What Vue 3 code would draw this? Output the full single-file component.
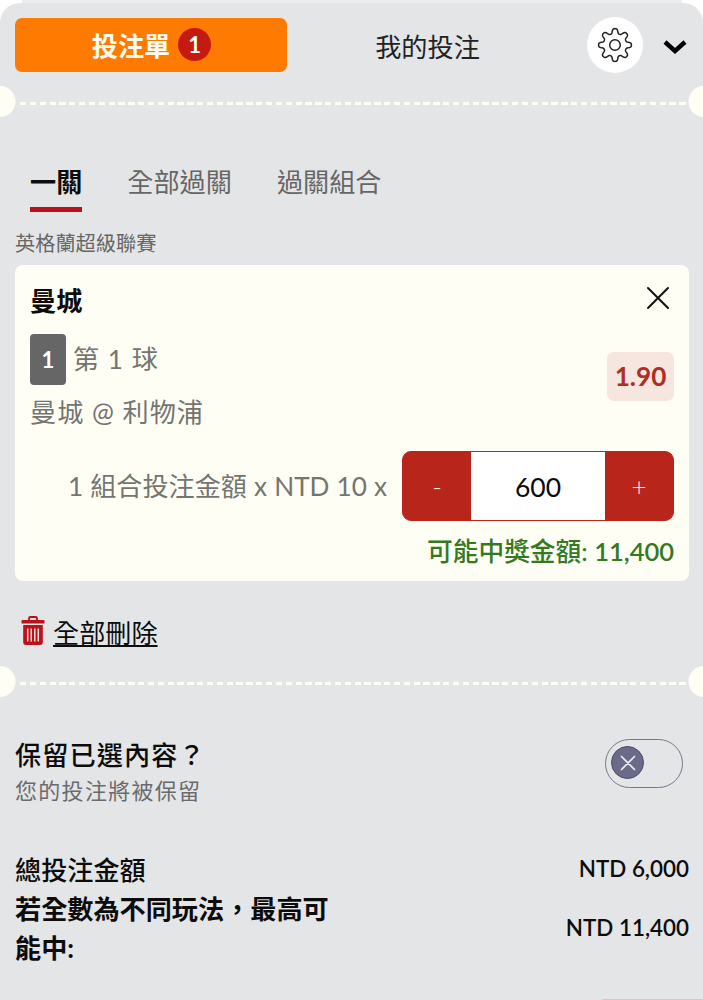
<script setup>
import { computed, ref } from 'vue';

const tabs = ['一關', '全部過關', '過關組合']
const activeTab = ref(0)
const unit = 10
const odds = ref(1.9)
const stake = ref(600)
const keepSelection = ref(false)

const format = (n) => Math.round(n).toLocaleString('en-US')

const total = computed(() => format(stake.value * unit))
const payout = computed(() => format(stake.value * unit * odds.value))

const changeStake = (step) => {
  stake.value = Math.max(0, stake.value + step)
}

// eight rounded teeth
const gearPath = () => {
  const points = []
  for (let deg = 0; deg < 360; deg += 2) {
    const a = (deg * Math.PI) / 180
    const r = 14 + 2.4 * Math.tanh(1.7 * Math.cos(8 * a)) / Math.tanh(1.7)
    points.push(`${(r * Math.cos(a)).toFixed(2)} ${(r * Math.sin(a)).toFixed(2)}`)
  }
  return `M${points.join('L')}Z`
}
const gear = gearPath()
</script>

<template>
  <div class="page">
    <div class="slip">
      <header class="header">
        <button class="slip-tab">投注單 <span class="count">1</span></button>
        <button class="my-bets">我的投注</button>
        <button class="settings">
          <svg width="36" height="36" viewBox="-18 -18 36 36" fill="none" stroke="#222" stroke-width="1.5" stroke-linejoin="round">
            <path :d="gear" />
            <circle r="5.3" />
          </svg>
        </button>
        <svg class="chevron" width="24" height="16" viewBox="0 0 24 16" fill="none" stroke="#000" stroke-width="4.4">
          <path d="M2 3L12 12L22 3" />
        </svg>
      </header>

      <div class="divider"></div>

      <nav class="tabs">
        <button
          v-for="(tab, i) in tabs"
          :key="tab"
          class="tab"
          :class="{ active: i === activeTab }"
          @click="activeTab = i"
        >{{ tab }}</button>
      </nav>

      <div class="league">英格蘭超級聯賽</div>

      <section class="card">
        <div class="card-head">
          <span class="team">曼城</span>
          <svg width="24" height="24" viewBox="0 0 24 24" fill="none" stroke="#111" stroke-width="2" stroke-linecap="round">
            <path d="M2 2L22 22M22 2L2 22" />
          </svg>
        </div>
        <div class="bet">
          <div>
            <div class="market"><span class="goal">1</span>第 1 球</div>
            <div class="match">曼城 @ 利物浦</div>
          </div>
          <span class="odds">{{ odds.toFixed(2) }}</span>
        </div>
        <div class="stake">
          <span class="stake-label">1 組合投注金額 x NTD {{ unit }} x</span>
          <div class="stepper">
            <button @click="changeStake(-1)">-</button>
            <span class="amount">{{ stake }}</span>
            <button @click="changeStake(1)">+</button>
          </div>
        </div>
        <div class="payout">可能中獎金額: <b>{{ payout }}</b></div>
      </section>

      <div class="remove">
        <svg width="24" height="30" viewBox="0 0 24 30">
          <path d="M8 4V2.2Q8 1 9.2 1H14.8Q16 1 16 2.2V4" fill="none" stroke="#bd1018" stroke-width="1.8" />
          <path d="M1.5 4H22.5Q23.5 4 23.5 5V7.4H.5V5Q.5 4 1.5 4Z" fill="#bd1018" />
          <path d="M2.2 9H21.8V26Q21.8 29 19 29H5Q2.2 29 2.2 26Z" fill="#bd1018" />
          <path d="M6.7 12.5V25.5M10.2 12.5V25.5M13.8 12.5V25.5M17.3 12.5V25.5" stroke="#f0dede" stroke-width="1.5" />
        </svg>
        <a>全部刪除</a>
      </div>

      <div class="divider"></div>

      <div class="keep">
        <div>
          <div class="keep-title">保留已選內容？</div>
          <div class="keep-note">您的投注將被保留</div>
        </div>
        <button class="switch" :class="{ on: keepSelection }" @click="keepSelection = !keepSelection">
          <span class="knob">
            <svg width="16" height="16" viewBox="0 0 16 16" fill="none" stroke="#eeeef4" stroke-width="1.7" stroke-linecap="round">
              <path d="M1.5 1.5L14.5 14.5M14.5 1.5L1.5 14.5" />
            </svg>
          </span>
        </button>
      </div>

      <div class="summary">
        <div class="row">
          <span class="total-label">總投注金額</span>
          <span class="money">NTD {{ total }}</span>
        </div>
        <div class="row">
          <span class="max-label">若全數為不同玩法，最高可能中:</span>
          <span class="money">NTD {{ payout }}</span>
        </div>
      </div>

      <div class="action"></div>
    </div>
  </div>
</template>

<style>
body {
  margin: 0;
}
</style>

<style scoped>
.page {
  width: 703px;
  height: 1000px;
  overflow: hidden;
  box-sizing: border-box;
  padding-top: 3px;
  background: linear-gradient(#eceded, #eceded) 22px 0 / 660px 3px no-repeat #fff;
  font-family: Lato, "Noto Sans CJK TC", sans-serif;
  font-size: 26.15px;
  line-height: 38px;
  color: #0c0c0c;
}
button {
  border: 0;
  padding: 0;
  margin: 0;
  background: none;
  font: inherit;
  color: inherit;
}
svg {
  display: block;
  flex: none;
}
.slip {
  height: 997px;
  display: flex;
  flex-direction: column;
  background: #e4e5e7;
  border-radius: 20px 20px 0 0;
}
.header {
  height: 83px;
  box-sizing: border-box;
  padding: 14px 15px 13px;
  display: flex;
  align-items: center;
}
.slip-tab {
  box-sizing: border-box;
  width: 272px;
  height: 54px;
  margin-bottom: 1px;
  padding: 3px 0 0 1px;
  border-radius: 7px;
  background: #ff7a00;
  color: #fffdf3;
  font-weight: 700;
  display: flex;
  align-items: center;
  justify-content: center;
  gap: 8px;
}
.count {
  width: 33px;
  height: 33px;
  margin-top: -4px;
  border-radius: 50%;
  background: #c41a12;
  font-size: 22px;
  line-height: 33px;
  text-align: center;
}
.my-bets {
  width: 281px;
  padding-top: 4px;
  color: #222;
}
.settings {
  width: 56px;
  height: 56px;
  margin-left: 19px;
  border-radius: 50%;
  background: #fff;
  display: flex;
  align-items: center;
  justify-content: center;
}
.chevron {
  margin: 4px 0 0 20px;
}
.divider {
  height: 31px;
  flex: none;
  background:
    radial-gradient(circle at 0 50%, #fffef5 15px, transparent 16px),
    radial-gradient(circle at 704px 50%, #fffef5 15px, transparent 16px),
    repeating-linear-gradient(90deg, #fffef5 0 6.3px, transparent 6.3px 9.84px) 19.7px 16px / 668px 3px no-repeat;
}
.tabs {
  display: flex;
  gap: 45px;
  margin: 46px 0 0 30px;
}
.tab {
  height: 49px;
  border-bottom: 5px solid transparent;
  line-height: 38px;
  color: #666;
  display: flex;
}
.tab.active {
  color: #0c0c0c;
  font-weight: 700;
  border-bottom-color: #b9121b;
}
.league {
  margin: 16px 0 0 15px;
  font-size: 20.2px;
  line-height: 30px;
  color: #666;
}
.card {
  height: 316px;
  flex: none;
  box-sizing: border-box;
  margin: 7px 14px 0 15px;
  padding: 17px 15px 0;
  border-radius: 8px;
  background: #fffef5;
}
.card-head {
  display: flex;
  justify-content: space-between;
  padding-right: 4px;
}
.team {
  font-weight: 700;
}
.card-head svg {
  margin-top: 4px;
}
.bet {
  display: flex;
  justify-content: space-between;
  margin-top: 13px;
  color: #747470;
  letter-spacing: 1px;
}
.market {
  display: flex;
  align-items: center;
  gap: 7px;
  height: 52px;
}
.goal {
  width: 36px;
  height: 51px;
  border-radius: 4px;
  background: #666;
  color: #fff;
  font-size: 22px;
  font-weight: 700;
  line-height: 51px;
  text-align: center;
  letter-spacing: 0;
}
.match {
  margin-top: 8px;
}
.odds {
  width: 67px;
  height: 49px;
  margin-top: 19px;
  border-radius: 7px;
  background: #f7e6e0;
  color: #ac2e24;
  font-weight: 700;
  line-height: 49px;
  text-align: center;
  letter-spacing: 0;
}
.stake {
  display: flex;
  align-items: center;
  justify-content: flex-end;
  gap: 15px;
  margin-top: 20px;
}
.stake-label {
  color: #747470;
  word-spacing: 0.4px;
}
.stepper {
  width: 272px;
  height: 70px;
  box-sizing: border-box;
  border: 1px solid #b8261b;
  border-radius: 9px;
  background: #b8261b;
  display: flex;
}
.stepper button {
  width: 68px;
  color: #fbe5df;
  font-weight: 300;
}
.amount {
  flex: 1;
  background: #fff;
  font-size: 26.5px;
  line-height: 70px;
  height: 68px;
  text-align: center;
}
.payout {
  margin-top: 11px;
  text-align: right;
  color: #35791f;
  font-size: 25.7px;
  font-weight: 500;
}
.payout b {
  font-size: 25.5px;
  font-weight: 600;
}
.remove {
  display: flex;
  align-items: center;
  gap: 8px;
  height: 38px;
  margin: 33px 0 0 21px;
}
.remove svg {
  margin-top: -4px;
}
.remove a {
  text-decoration: underline;
  text-decoration-thickness: 2px;
  text-underline-offset: 2px;
}
.remove + .divider {
  margin-top: 14px;
}
.keep {
  display: flex;
  justify-content: space-between;
  align-items: flex-start;
  margin: 39px 20px 0 15px;
}
.keep-title {
  font-weight: 500;
  letter-spacing: 1.1px;
}
.keep-note {
  font-size: 22px;
  line-height: 33px;
  color: #6b6b6d;
  letter-spacing: 1.3px;
}
.switch {
  width: 78px;
  height: 49px;
  margin-top: 3px;
  box-sizing: border-box;
  padding: 0 5px;
  border: 1.5px solid #77768e;
  border-radius: 25px;
  display: flex;
  align-items: center;
}
.switch.on {
  justify-content: flex-end;
}
.knob {
  width: 33px;
  height: 33px;
  margin-top: -2px;
  box-sizing: border-box;
  border: 1.5px solid #4b4968;
  border-radius: 50%;
  background: #6c6a89;
  display: flex;
  align-items: center;
  justify-content: center;
}
.summary {
  margin: 44px 14px 0 15px;
}
.row {
  display: flex;
  justify-content: space-between;
  align-items: center;
  line-height: 39px;
}
.total-label {
  font-weight: 500;
}
.max-label {
  width: 324px;
  font-weight: 700;
}
.money {
  font-size: 22.4px;
  font-weight: 600;
  margin-top: -4px;
}
.action {
  width: 101px;
  height: 10px;
  margin: auto 0 -9px auto;
  background: #d9c6cc;
}
</style>
